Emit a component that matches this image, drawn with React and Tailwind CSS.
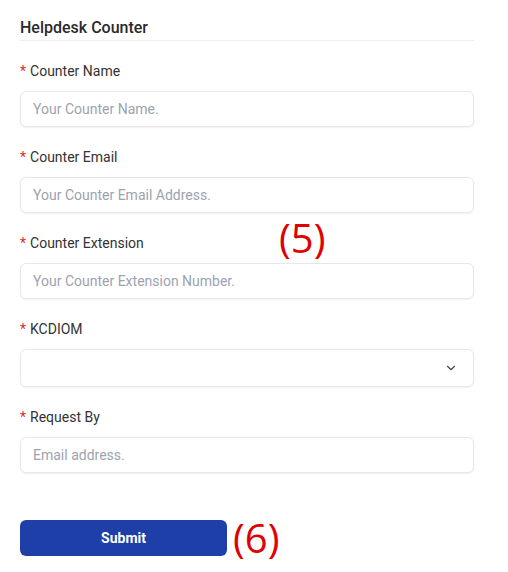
import { ChevronDown } from "lucide-react";

const fields = [
  { label: "Counter Name", placeholder: "Your Counter Name." },
  { label: "Counter Email", placeholder: "Your Counter Email Address." },
  { label: "Counter Extension", placeholder: "Your Counter Extension Number." },
  { label: "KCDIOM", select: true },
  { label: "Request By", placeholder: "Email address." },
];

function Field({ label, placeholder, select }) {
  return (
    <div className="mt-5 first:mt-[20px]">
      <label className="block text-[14px] leading-5 text-[#333]">
        <span className="text-[#d32f2f] mr-1">*</span>
        {label}
      </label>
      {select ? (
        <div className="mt-[10px] h-[38px] w-full rounded-md border border-[#e5e7eb] bg-white shadow-[0_1px_2px_rgba(0,0,0,0.06)] flex items-center justify-end pr-[15px]">
          <ChevronDown size={14} strokeWidth={2} className="text-[#444]" />
        </div>
      ) : (
        <input
          type="text"
          placeholder={placeholder}
          className="mt-[10px] block h-9 w-full rounded-md border border-[#e5e7eb] bg-white px-3 text-[14px] text-[#333] placeholder:text-[#9ca3af] shadow-[0_1px_2px_rgba(0,0,0,0.06)] outline-none"
        />
      )}
    </div>
  );
}

export default function App() {
  return (
    <div
      className="relative min-h-[572px] bg-white px-5"
      style={{ fontFamily: "Roboto, 'Liberation Sans', sans-serif" }}
    >
      <div className="w-[454px]">
        <h2 className="pt-[18px] pb-[2px] text-[16px] leading-5 font-medium text-[#2a2a2a] border-b border-[#eceef1]">
          Helpdesk Counter
        </h2>
        <div>
          {fields.map((f) => (
            <Field key={f.label} {...f} />
          ))}
        </div>
        <div className="mt-[45px] flex items-center gap-[6px]">
          <button className="h-9 w-[207px] rounded-md bg-[#1e3fa8] text-[14px] font-bold text-white">
            Submit
          </button>
          <span
            className="text-[40px] leading-none text-[#e00000]"
            style={{ fontFamily: "'Open Sans', sans-serif" }}
          >
            (6)
          </span>
        </div>
      </div>
      <span
        className="absolute left-[279px] top-[218px] text-[40px] leading-none text-[#e00000]"
        style={{ fontFamily: "'Open Sans', sans-serif" }}
      >
        (5)
      </span>
    </div>
  );
}
